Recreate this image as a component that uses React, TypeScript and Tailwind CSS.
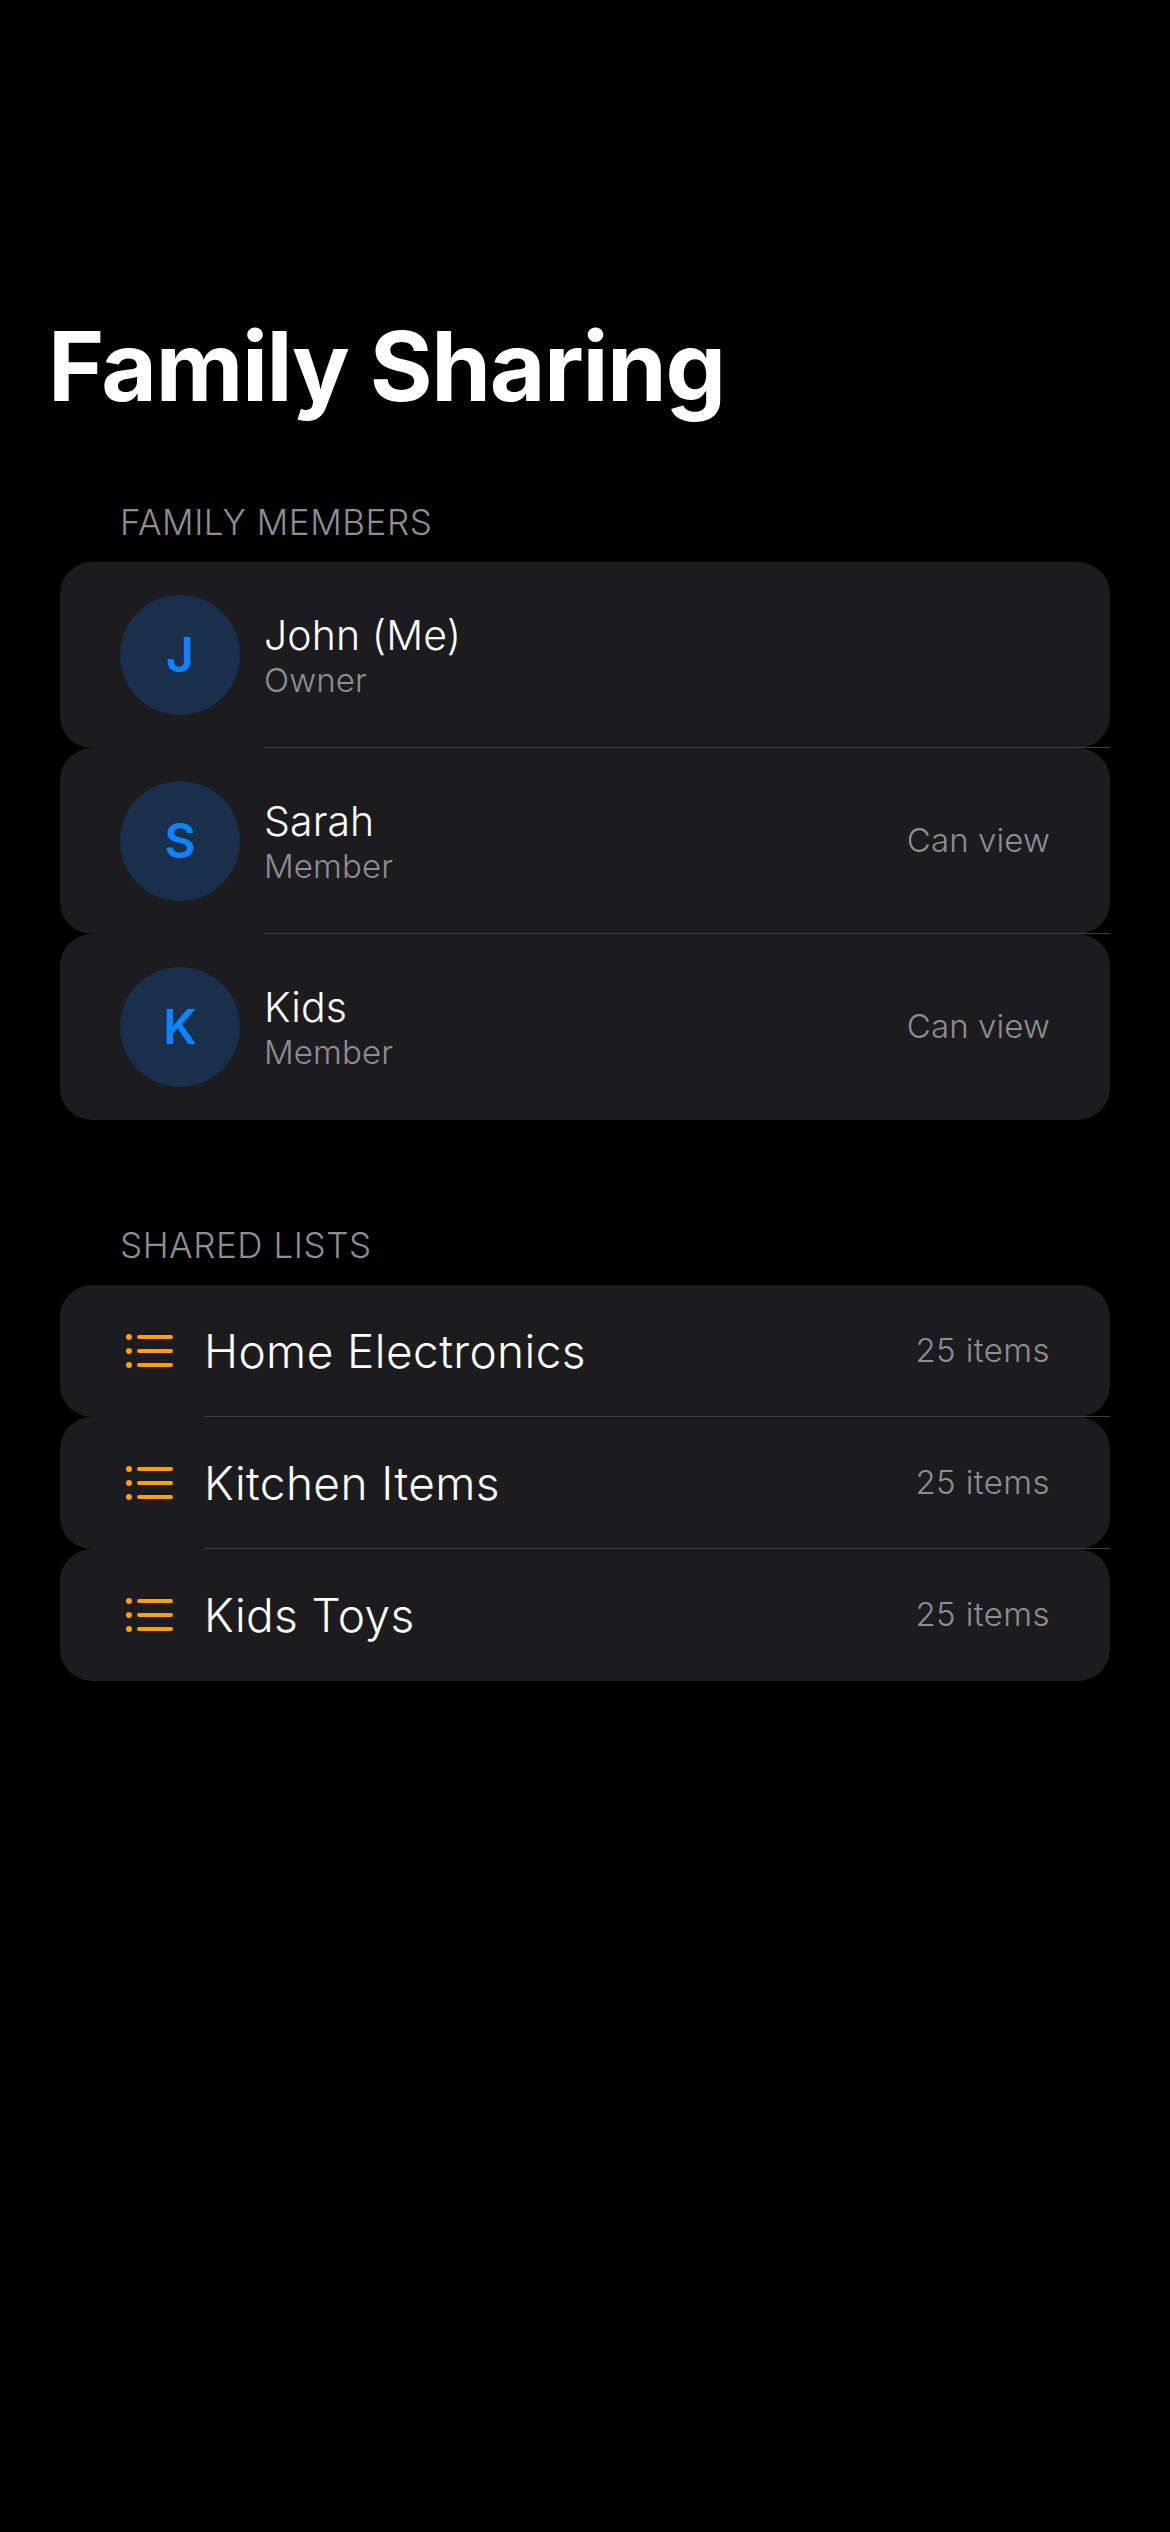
const font = { fontFamily: "Inter, sans-serif" };

function Member({ initial, name, role, right, last }: { initial: string; name: string; role: string; right?: string; last?: boolean }) {
  return (
    <div className="relative">
      <div className="flex h-[186px] items-center rounded-[32px] bg-[#1c1c1e] pl-[60px] pr-[60px]">
        <div className="flex h-[120px] w-[120px] shrink-0 items-center justify-center rounded-full bg-[#1a2f4b] text-[48px] font-semibold text-[#0a84ff]">
          {initial}
        </div>
        <div className="ml-6 flex flex-col">
          <span className="text-[41px] font-[350] leading-[50px] tracking-[0.1px] text-white">{name}</span>
          <span className="text-[33px] font-[350] leading-[40px] tracking-[0.1px] text-[#8e8e93]">{role}</span>
        </div>
        {right && <span className="ml-auto text-[33px] font-[350] tracking-[0.1px] text-[#8e8e93]">{right}</span>}
      </div>
      {!last && <div className="absolute bottom-0 left-[204px] right-0 h-px bg-[#3f3f42]" />}
    </div>
  );
}

function ListIcon() {
  return (
    <svg width="48" height="34" viewBox="0 0 48 34" className="shrink-0">
      <g fill="#ff9f0a">
        <circle cx="3" cy="3" r="3" />
        <circle cx="3" cy="17" r="3" />
        <circle cx="3" cy="31" r="3" />
        <rect x="11" y="1" width="36" height="4" rx="2" />
        <rect x="11" y="15" width="36" height="4" rx="2" />
        <rect x="11" y="29" width="36" height="4" rx="2" />
      </g>
    </svg>
  );
}

function SharedList({ name, last }: { name: string; last?: boolean }) {
  return (
    <div className="relative">
      <div className="flex h-[132px] items-center rounded-[32px] bg-[#1c1c1e] pl-[66px] pr-[60px]">
        <ListIcon />
        <span className="ml-[30px] text-[46px] font-[350] tracking-[0.4px] text-white">{name}</span>
        <span className="ml-auto text-[33px] font-[350] tracking-[0.4px] text-[#8e8e93]">25 items</span>
      </div>
      {!last && <div className="absolute bottom-0 left-[144px] right-0 h-px bg-[#3f3f42]" />}
    </div>
  );
}

export default function App() {
  return (
    <div style={font} className="min-h-[2532px] bg-black pt-[308px]">
      <h1 className="pl-12 text-[96px] font-bold leading-[116px] tracking-[-1.4px] text-white">Family Sharing</h1>
      <div className="mt-[76px] px-[60px]">
        <div className="pl-[60px] text-[35px] font-[350] leading-[44px] tracking-[0.55px] text-[#8e8e93]">FAMILY MEMBERS</div>
        <div className="mt-[18px]">
          <Member initial="J" name="John (Me)" role="Owner" />
          <Member initial="S" name="Sarah" role="Member" right="Can view" />
          <Member initial="K" name="Kids" role="Member" right="Can view" last />
        </div>
        <div className="mt-[103px] pl-[60px] text-[35px] font-[350] leading-[44px] tracking-[0.55px] text-[#8e8e93]">SHARED LISTS</div>
        <div className="mt-[18px]">
          <SharedList name="Home Electronics" />
          <SharedList name="Kitchen Items" />
          <SharedList name="Kids Toys" last />
        </div>
      </div>
    </div>
  );
}
